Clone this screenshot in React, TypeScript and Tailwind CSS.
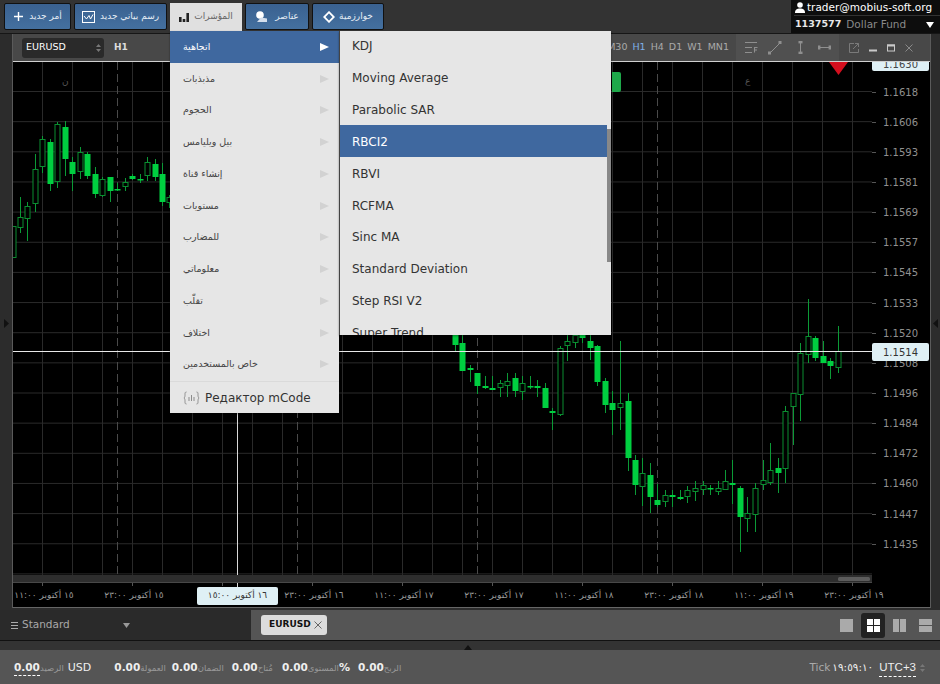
import React from "react";

const FONT = "font-['DejaVu_Sans','Noto_Sans',sans-serif]";

// x, wickTop, wickBottom, bodyTop, bodyBottom, filled
const candles: [number, number, number, number, number, number][] = [
  [13, 226, 258, 226, 258, 0],
  [20, 197, 233, 217, 228, 0],
  [27.5, 202, 241, 206, 219, 0],
  [35, 154, 212, 169, 204, 0],
  [42, 136, 173, 139, 167, 0],
  [50, 139, 191, 142, 184, 1],
  [57, 122, 188, 124, 182, 0],
  [65, 121, 176, 127, 159, 1],
  [72, 157, 191, 162, 174, 1],
  [80, 147, 179, 152, 172, 0],
  [87, 152, 179, 154, 176, 1],
  [95, 167, 198, 174, 194, 1],
  [102.5, 177, 197, 179, 196, 0],
  [110, 177, 202, 177, 191, 1],
  [117, 183, 191, 189, 190, 1],
  [125, 178, 191, 182, 187, 0],
  [132, 174, 180, 176, 179, 1],
  [140, 174, 183, 179, 180, 1],
  [147, 157, 181, 162, 176, 0],
  [155, 159, 181, 164, 177, 1],
  [162, 163, 206, 174, 202, 1],
  [169, 195, 208, 197, 203, 0],
  [455, 335, 352, 335, 345, 1],
  [462.5, 335, 371, 343, 371, 1],
  [470, 365, 382, 368, 370, 1],
  [477.5, 373, 394, 373, 386, 1],
  [485, 376, 389, 386, 388, 1],
  [492.5, 376, 390, 388, 390, 1],
  [500, 380, 397, 383, 388, 0],
  [507.5, 373, 397, 381, 386, 0],
  [515, 373, 397, 378, 391, 1],
  [522.5, 376, 400, 383, 392, 0],
  [530, 376, 389, 386, 387, 1],
  [537.5, 380, 397, 386, 388, 1],
  [545, 383, 408, 388, 408, 1],
  [552.5, 408, 430, 411, 413, 1],
  [560, 346, 416, 348, 415, 0],
  [567.5, 335, 361, 341, 346, 0],
  [575, 335, 348, 335, 343, 0],
  [582.5, 335, 343, 335, 338, 1],
  [590, 335, 360, 341, 348, 1],
  [597.5, 345, 386, 346, 382, 1],
  [605, 378, 413, 381, 405, 1],
  [612.5, 391, 435, 403, 410, 1],
  [620, 341, 430, 403, 408, 0],
  [628, 393, 471, 401, 458, 1],
  [635.5, 455, 495, 460, 485, 1],
  [642.5, 458, 506, 473, 487, 0],
  [650, 463, 513, 475, 497, 1],
  [657.5, 484, 507, 500, 505, 1],
  [665, 490, 507, 495, 502, 0],
  [672.5, 490, 507, 495, 497, 1],
  [680, 490, 500, 497, 499, 1],
  [687.5, 486, 503, 490, 497, 0],
  [695, 481, 501, 488, 492, 0],
  [703, 481, 495, 485, 490, 0],
  [710.5, 485, 495, 488, 489, 1],
  [718, 481, 495, 488, 492, 0],
  [725.5, 470, 490, 481, 490, 0],
  [732.5, 460, 504, 483, 485, 1],
  [740, 486, 552, 488, 517, 1],
  [747.5, 497, 532, 513, 519, 0],
  [755.5, 483, 532, 488, 515, 0],
  [763, 460, 490, 480, 485, 0],
  [770, 443, 485, 470, 483, 0],
  [778, 458, 493, 468, 473, 1],
  [785.5, 406, 483, 411, 469, 0],
  [793, 393, 445, 393, 407, 0],
  [800.5, 343, 421, 353, 395, 0],
  [808, 299, 363, 336, 355, 0],
  [815.5, 336, 361, 338, 358, 1],
  [823, 341, 363, 356, 363, 1],
  [830, 358, 379, 361, 366, 1],
  [838, 326, 373, 351, 368, 0],
];

const vGrid = Array.from({ length: 28 }, (_, i) => 42.5 + i * 30);
const hGrid = Array.from({ length: 17 }, (_, i) => 91.5 + i * 30.15);
const dashed = [117.5, 297.5, 477.5, 657.5];

const prices = ["1.1618","1.1606","1.1593","1.1581","1.1569","1.1557","1.1545","1.1533","1.1520","1.1508","1.1496","1.1484","1.1472","1.1460","1.1447","1.1435"];

const xLabels = [
  "١٥ أكتوبر ١١:٠٠","١٥ أكتوبر ٢٣:٠٠","١٦ أكتوبر ١١:٠٠","١٦ أكتوبر ٢٣:٠٠","١٧ أكتوبر ١١:٠٠","١٧ أكتوبر ٢٣:٠٠","١٨ أكتوبر ١١:٠٠","١٨ أكتوبر ٢٣:٠٠","١٩ أكتوبر ١١:٠٠","١٩ أكتوبر ٢٣:٠٠",
];

const menuItems = ["اتجاهية","مذبذبات","الحجوم","بيل ويليامس","إنشاء قناة","مستويات","للمضارب","معلوماتي","تقلّب","اختلاف","خاص بالمستخدمين"];
const subItems = ["KDJ","Moving Average","Parabolic SAR","RBCI2","RBVI","RCFMA","Sinc MA","Standard Deviation","Step RSI V2","Super Trend"];

function Chart() {
  return (
    <svg viewBox="13 62 859 521" className="block w-[859px] h-[521px] shrink-0">
      <rect x="13" y="62" width="859" height="521" fill="#000" />
      {vGrid.map((x) => <line key={x} x1={x} x2={x} y1="62" y2="575" stroke="#2a2a2a" strokeWidth="1" />)}
      {hGrid.map((y) => <line key={y} x1="13" x2="872" y1={y} y2={y} stroke="#2a2a2a" strokeWidth="1" />)}
      {dashed.map((x) => <line key={x} x1={x} x2={x} y1="62" y2="575" stroke="#4a4a4a" strokeWidth="1" strokeDasharray="8 4" />)}
      {candles.map(([x, wt, wb, bt, bb, f], i) => {
        const cx = Math.floor(x) + 0.5;
        return (
          <g key={i}>
            <line x1={cx} x2={cx} y1={wt} y2={wb} stroke="#0b9a36" strokeWidth="1" />
            {f ? (
              <rect x={cx - 3} y={bt} width="6" height={Math.max(bb - bt, 1.5)} fill="#00cf40" />
            ) : (
              <rect x={cx - 2.5} y={bt + 0.5} width="5" height={Math.max(bb - bt - 1, 1)} fill="#000" stroke="#0a8d30" strokeWidth="1" />
            )}
          </g>
        );
      })}
      <line x1="13" x2="872" y1="351.5" y2="351.5" stroke="#e8e8e8" strokeWidth="1" />
      <line x1="237.5" x2="237.5" y1="62" y2="583" stroke="#d8d8d8" strokeWidth="1" />
      <polygon points="829,62 848,62 838.5,75" fill="#d40f1e" />
      <rect x="13" y="575" width="859" height="8" fill="#2e2e2e" />
      <line x1="13" x2="872" y1="582.5" y2="582.5" stroke="#484848" />
      <rect x="838" y="577" width="32" height="4" rx="1.5" fill="#5c5c5c" />
    </svg>
  );
}

function PlusIcon() {
  return <svg width="11" height="11" viewBox="0 0 11 11"><path d="M5.5 1v9M1 5.5h9" stroke="#fff" strokeWidth="1.4" /></svg>;
}
function ChartBoxIcon() {
  return (
    <svg width="13" height="12" viewBox="0 0 13 12" fill="none">
      <rect x="0.5" y="0.5" width="12" height="11" stroke="#fff" />
      <path d="M2 5l2.5 3L7 4.5 8.5 8 11 3.5" stroke="#fff" strokeWidth="1" />
    </svg>
  );
}
function BarsIcon() {
  return (
    <svg width="10" height="9" viewBox="0 0 10 9"><path d="M0 4h2.6v5H0zM3.7 6h2.6v3H3.7zM7.4 0H10v9H7.4z" fill="#222" /></svg>
  );
}
function ElementsIcon() {
  return (
    <svg width="12" height="11" viewBox="0 0 12 11"><circle cx="5" cy="4" r="3.8" fill="#fff" /><path d="M2 11 L6 6.5 L12 7.5 L12 11Z" fill="#d5dfec" /></svg>
  );
}
function DiamondIcon() {
  return (
    <svg width="12" height="12" viewBox="0 0 12 12"><path d="M6 1.2L10.8 6 6 10.8 1.2 6z" fill="none" stroke="#fff" strokeWidth="1.8" /></svg>
  );
}

function BlueButton({ w, icon, label, gap = "gap-2" }: { w: string; icon: React.ReactNode; label: string; gap?: string }) {
  return (
    <div className={`${w} ${gap} h-[27px] flex items-center justify-center border border-[#111] rounded-[2px] bg-gradient-to-b from-[#3a6190] to-[#44709f] text-[9px] text-[#e6edf5]`}>
      {icon}
      <span dir="rtl" className="whitespace-nowrap">{label}</span>
    </div>
  );
}

function Header() {
  return (
    <div className="h-[34px] shrink-0 flex bg-[#333333] border-b border-[#161616]">
      <div className="flex flex-1 items-start gap-[3px] pl-[4px] pt-[3px]">
        <BlueButton w="w-[67px]" icon={<PlusIcon />} label="أمر جديد" gap="gap-[5px]" />
        <BlueButton w="w-[93px]" icon={<ChartBoxIcon />} label="رسم بياني جديد" gap="gap-[5px]" />
        <div className="w-[72px] h-[28px] flex items-center justify-center gap-[5px] bg-[#e0e0e0] text-[9px] text-[#666]">
          <BarsIcon />
          <span dir="rtl">المؤشرات</span>
        </div>
        <BlueButton w="w-[64px]" icon={<ElementsIcon />} label="عناصر" />
        <BlueButton w="w-[72px]" icon={<DiamondIcon />} label="خوارزمية" gap="gap-[4px]" />
      </div>
      <div className="w-[149px] bg-[#0d0d0d] flex flex-col pl-[3px]">
        <div className="h-[16px] flex items-center gap-[2px] pl-[1px] text-[10.5px] text-white border-b border-[#333] whitespace-nowrap">
          <svg className="shrink-0" width="10" height="11" viewBox="0 0 10 11"><circle cx="5" cy="3" r="2.8" fill="#fff" /><path d="M0 11c0-3.5 2-4.5 5-4.5s5 1 5 4.5z" fill="#fff" /></svg>
          <span>trader@mobius-soft.org</span>
        </div>
        <div className="flex-1 flex items-center gap-[5px] pl-[1px] text-[10.5px] whitespace-nowrap">
          <span className="text-[#e8e8e8] font-semibold text-[9.5px]">1137577</span>
          <span className="text-[#8a8a8a]">Dollar Fund</span>
          <svg className="ml-auto mr-[6px]" width="8" height="6" viewBox="0 0 8 6"><path d="M0 0h8L4 6z" fill="#fff" /></svg>
        </div>
      </div>
    </div>
  );
}

function Toolbar() {
  const c = "#8f8f8f";
  return (
    <div className="h-[28px] shrink-0 flex items-center bg-[#484848] text-[9.5px] text-[#aaa] border-b border-[#cfcfcf]">
      <div className="ml-[9px] w-[82px] h-[20px] rounded-[3px] bg-[#2a2a2a] flex items-center justify-between pl-[4px] pr-[3px] text-white text-[9.5px]">
        <span>EURUSD</span>
        <svg width="5" height="10" viewBox="0 0 5 10"><path d="M0 4l2.5-3L5 4zM0 6l2.5 3L5 6z" fill="#777" /></svg>
      </div>
      <span className="ml-[10px] text-[#ddd] font-semibold text-[9px]">H1</span>
      <div className="ml-auto flex items-center h-full">
        <div className="flex items-center gap-[5px] mr-[7px]">
          <span>M30</span><span className="text-[#7fb0e8]">H1</span><span>H4</span><span>D1</span><span>W1</span><span>MN1</span>
        </div>
        <div className="h-full w-[103px] bg-[#505050] flex items-center pl-[9px]">
          <svg width="13" height="13" viewBox="0 0 13 13" fill="none" stroke={c}><path d="M0 1.5h12M0 6.5h7M0 11.5h7" /><path d="M9.5 11.5v-5h3M9.5 9h2.5" strokeWidth="1.1" /></svg>
          <svg className="ml-[10px]" width="14" height="14" viewBox="0 0 14 14" fill="none"><path d="M2 12L12 2" stroke={c} /><rect x="0" y="10.5" width="3" height="3" fill={c} /><rect x="10.5" y="0" width="3" height="3" fill={c} /></svg>
          <svg className="ml-[16px]" width="5" height="13" viewBox="0 0 5 13" fill="none"><path d="M2.5 1v11" stroke={c} /><rect x="0.5" y="0" width="4" height="2.4" fill={c} /><rect x="0.5" y="10.6" width="4" height="2.4" fill={c} /></svg>
          <svg className="ml-[15px]" width="13" height="5" viewBox="0 0 13 5" fill="none"><path d="M1 2.5h11" stroke={c} /><rect x="0" y="0.5" width="2.4" height="4" fill={c} /><rect x="10.6" y="0.5" width="2.4" height="4" fill={c} /></svg>
        </div>
        <div className="h-full w-[91px] flex items-center pl-[10px] gap-[10px]">
          <svg width="10" height="10" viewBox="0 0 10 10" fill="none" stroke="#7a7a7a"><path d="M5 .5H.5v9h9V6" /><path d="M4 6L9.5.5M6 .5h3.5V4" /></svg>
          <svg width="8" height="8" viewBox="0 0 8 8"><rect x="0" y="5.5" width="8" height="2" fill="#c9c9c9" /></svg>
          <svg width="8" height="8" viewBox="0 0 8 8" fill="none" stroke="#c9c9c9"><rect x=".5" y="1" width="7" height="6" /><path d="M0 1.5h8" strokeWidth="2" /></svg>
          <svg width="8" height="8" viewBox="0 0 8 8" fill="none" stroke="#8a8a8a"><path d="M.5.5l7 7M7.5.5l-7 7" /></svg>
        </div>
      </div>
    </div>
  );
}

function PriceAxis() {
  return (
    <div className="relative w-[58px] shrink-0 bg-black text-[10px] text-[#909090]">
      <div className="h-[15px]" />
      {prices.map((p) => (
        <div key={p} className="relative h-[30.15px] flex items-center pl-[11px]">
          <span className="absolute left-0 w-[4px] h-px bg-[#555]" />
          {p}
        </div>
      ))}
      <div className="absolute left-0 top-0 w-[57px] h-[9px] bg-[#dff0f5] rounded-b-[2px] overflow-hidden text-[#444] pl-[11px] leading-[6px]">1.1630</div>
      <div className="absolute left-0 top-[281px] w-[57px] h-[18px] bg-[#dff0f5] rounded-[2px] text-[#333] pl-[11px] flex items-center">1.1514</div>
    </div>
  );
}

function TimeAxis() {
  return (
    <div className="relative h-[25px] shrink-0 bg-black border-b border-[#666] text-[9px] text-[#9a9a9a] flex pl-[1px] pt-[6px]">
      {xLabels.map((l, i) => (
        <div key={i} className="relative w-[90px] shrink-0">
          <span className="absolute left-[28px] -top-[6px] w-px h-[3px] bg-[#555]" />
          <span dir="rtl" className="block w-[60px] text-center whitespace-nowrap">{i === 2 ? "" : l}</span>
        </div>
      ))}
      <span className="absolute left-[224px] top-0 w-px h-[4px] bg-[#d8d8d8]" />
      <div className="absolute left-[184px] top-[4px] w-[81px] h-[18px] rounded-[2px] bg-[#dff0f5] text-[#333] flex items-center justify-center">
        <span dir="rtl">١٦ أكتوبر ١٥:٠٠</span>
      </div>
    </div>
  );
}

function Middle() {
  return (
    <div className="flex flex-1 min-h-0 bg-[#2c2c2c]">
      <div className="w-[12px] shrink-0 flex items-center justify-center pt-[3px]">
        <svg width="5" height="9" viewBox="0 0 5 9"><path d="M0 0v9l5-4.5z" fill="#111" /></svg>
      </div>
      <div className="w-[919px] flex flex-col shrink-0 border-x border-[#5a5a5a] self-start">
        <Toolbar />
        <div className="flex">
          <Chart />
          <PriceAxis />
        </div>
        <TimeAxis />
      </div>
      <div className="w-[9px] shrink-0 flex items-center justify-center pt-[3px]">
        <svg width="5" height="9" viewBox="0 0 5 9"><path d="M5 0v9L0 4.5z" fill="#111" /></svg>
      </div>
    </div>
  );
}

function TabBar() {
  return (
    <div className="h-[31px] shrink-0 flex border-b border-[#111] mt-[1px]">
      <div className="w-[251px] bg-[#2a2a2a] flex items-center pl-[11px] text-[10.5px] text-[#a8a8a8]">
        <svg width="7" height="7" viewBox="0 0 7 7" className="mr-[4px]"><path d="M0 .5h7M0 3.5h7M0 6.5h7" stroke="#aaa" /></svg>
        <span>Standard</span>
        <svg className="ml-[53px]" width="7" height="5" viewBox="0 0 7 5"><path d="M0 0h7L3.5 5z" fill="#999" /></svg>
      </div>
      <div className="flex-1 bg-[#555] flex items-center pl-[10px]">
        <div className="w-[66px] h-[20px] bg-[#dcdcdc] rounded-[3px] flex items-center pl-[8px] text-[9px] font-semibold text-[#111]">
          EURUSD
          <svg className="ml-[3px]" width="8" height="8" viewBox="0 0 8 8"><path d="M.5.5l7 7M7.5.5l-7 7" stroke="#666" /></svg>
        </div>
        <div className="ml-auto flex items-center mr-[8px]">
          <span className="w-[13px] h-[13px] bg-[#aaa]" />
          <span className="ml-[8px] w-[24px] h-[25px] bg-[#222] rounded-[3px] flex items-center justify-center">
            <svg width="13" height="13" viewBox="0 0 13 13"><path d="M0 0h6v6H0zM7 0h6v6H7zM0 7h6v6H0zM7 7h6v6H7z" fill="#fff" /></svg>
          </span>
          <svg className="ml-[8px]" width="13" height="13" viewBox="0 0 13 13"><path d="M0 0h6v13H0zM7 0h6v13H7z" fill="#aaa" /></svg>
          <svg className="ml-[13px]" width="13" height="13" viewBox="0 0 13 13"><path d="M0 0h13v6H0zM0 7h13v6H0z" fill="#aaa" /></svg>
        </div>
      </div>
    </div>
  );
}

function Stat({ v, l, dashed: d }: { v: string; l: string; dashed?: boolean }) {
  return (
    <span className="flex items-center">
      <span className={`font-bold text-[#eee] text-[10.5px] ${d ? "border-b border-dashed border-white" : ""}`}>{v}</span>
      <span dir="rtl" className="text-[8.5px] text-[#999]">{l}</span>
    </span>
  );
}

function StatusBar() {
  return (
    <div className="h-[34px] shrink-0 bg-[#555] flex items-center pl-[14px] pr-[14px] pt-[2px] text-[11px] text-[#eee]">
      <Stat v="0.00" l="الرصيد" dashed />
      <span className="ml-[4px]">USD</span>
      <span className="ml-[23px]"><Stat v="0.00" l="العمولة" /></span>
      <span className="ml-[6px]"><Stat v="0.00" l="الضمان" /></span>
      <span className="ml-[8px]"><Stat v="0.00" l="مُتاح" /></span>
      <span className="ml-[9px]"><Stat v="0.00" l="المستوى" /></span>
      <span className="font-bold text-[11px]">%</span>
      <span className="ml-[8px]"><Stat v="0.00" l="الربح" /></span>
      <span className="ml-auto text-[#aaa] text-[10.5px]">Tick</span>
      <span className="ml-[2px] text-[10.5px] text-[#eee]">١٩:٥٩:١٠</span>
      <span className="ml-[6px] border-b border-dashed border-white font-['Liberation_Sans',sans-serif] text-[11.5px]">UTC+3</span>
      <svg className="ml-[4px] mr-px" width="5" height="10" viewBox="0 0 5 10"><path d="M0 4l2.5-3L5 4zM0 6l2.5 3L5 6z" fill="#777" /></svg>
    </div>
  );
}

function Menus() {
  return (
    <div className="absolute left-[170px] top-[31px] flex items-start">
      <div className="w-[169px] bg-[#e6e6e6] text-[9.5px] text-[#444] shadow-[0_1px_2px_rgba(0,0,0,0.4)]">
        {menuItems.map((m, i) => (
          <div key={m} className={`h-[31.75px] flex items-center justify-between pl-[13px] pr-[10px] ${i === 0 ? "bg-[#3f689f] text-white" : ""}`}>
            <span dir="rtl">{m}</span>
            <svg width="9" height="8" viewBox="0 0 9 8"><path d="M0 0l9 4-9 4z" fill={i === 0 ? "#fff" : "#d2d2d2"} /></svg>
          </div>
        ))}
        <div className="border-t border-[#dadada] mt-[1px] h-[32px] flex items-center pl-[13px] text-[12px] text-[#333]">
          <svg width="17" height="14" viewBox="0 0 17 14" fill="none" stroke="#8c8c8c" className="mr-[5px]">
            <path d="M3.5 1C2 1 2 2 2 3.5S2 6 1 7c1 1 1 2 1 3.5S2 13 3.5 13M13.5 1C15 1 15 2 15 3.5S15 6 16 7c-1 1-1 2-1 3.5S15 13 13.5 13" />
            <path d="M6 10V6M8.5 10V4M11 10V6" />
          </svg>
          Редактор mCode
        </div>
      </div>
      <div className="relative w-[272px] h-[304px] overflow-hidden bg-[#e6e6e6] text-[12px] text-[#333] border-l border-[#444] shadow-[0_1px_2px_rgba(0,0,0,0.4)]">
        <div className="-mt-[1.5px]">
          {subItems.map((s, i) => (
            <div key={s} className={`h-[31.85px] flex items-center pl-[12px] pt-[2px] mr-[4px] ${i === 3 ? "bg-[#3f689f] text-white" : ""}`}>{s}</div>
          ))}
        </div>
        <div className="absolute right-0 top-[98px] w-[4px] h-[133px] bg-[#888]" />
      </div>
    </div>
  );
}

export default function App() {
  return (
    <div className={`relative w-[940px] h-[684px] overflow-hidden flex flex-col bg-[#2c2c2c] ${FONT}`}>
      <Header />
      <Middle />
      <TabBar />
      <div className="h-[9px] shrink-0 bg-[#333] flex justify-center items-end pr-[4px]">
        <svg width="8" height="5" viewBox="0 0 8 5"><path d="M0 5l4-5 4 5z" fill="#111" /></svg>
      </div>
      <StatusBar />
      <div className="absolute left-[612px] top-[72px] w-[9px] h-[20px] bg-[#1ea84a] rounded-r-[2px]" />
      <span className="absolute left-[62px] top-[75px] text-[9px] text-[#555]">ن</span>
      <span className="absolute left-[745px] top-[75px] text-[9px] text-[#555]">ع</span>
      <Menus />
    </div>
  );
}
